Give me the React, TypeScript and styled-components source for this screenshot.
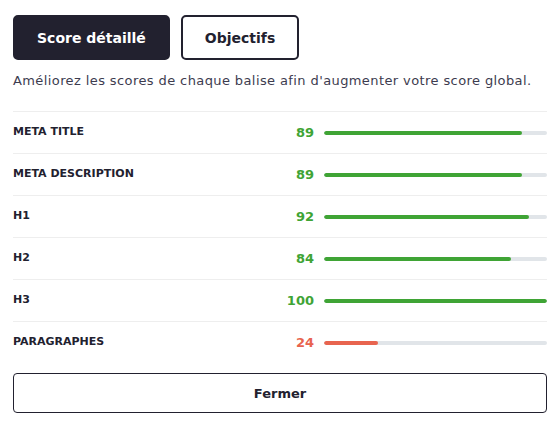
import React, { useState } from "react";
import styled, { createGlobalStyle } from "styled-components";

const GlobalStyle = createGlobalStyle`
  body {
    margin: 0;
    background: #ffffff;
    font-family: "DejaVu Sans", "Open Sans", sans-serif;
    color: #22212f;
  }
`;

type Score = { label: string; value: number };

const scores: Score[] = [
    { label: "Meta title", value: 89 },
    { label: "Meta description", value: 89 },
    { label: "H1", value: 92 },
    { label: "H2", value: 84 },
    { label: "H3", value: 100 },
    { label: "Paragraphes", value: 24 },
];

const App = () => {
    const [tab, setTab] = useState<"score" | "objectifs">("score");

    return (
        <>
            <GlobalStyle />
            <Panel>
                <Tabs>
                    <TabButton $active={tab === "score"} onClick={() => setTab("score")}>
                        Score détaillé
                    </TabButton>
                    <TabButton $active={tab === "objectifs"} onClick={() => setTab("objectifs")}>
                        Objectifs
                    </TabButton>
                </Tabs>
                <Intro>Améliorez les scores de chaque balise afin d'augmenter votre score global.</Intro>
                <List>
                    {scores.map((s) => (
                        <Row key={s.label}>
                            <Label>{s.label}</Label>
                            <Value $low={s.value < 50}>{s.value}</Value>
                            <Track>
                                <Fill $low={s.value < 50} style={{ width: `${s.value}%` }} />
                            </Track>
                        </Row>
                    ))}
                </List>
                <CloseButton>Fermer</CloseButton>
            </Panel>
        </>
    );
};

export default App;

const Panel = styled.div`
    width: 534px;
    padding: 15px 9px 0 13px;
    display: flex;
    flex-direction: column;
`;

const Tabs = styled.div`
    display: flex;
    gap: 11px;
`;

const TabButton = styled.button<{ $active: boolean }>`
    height: 45px;
    padding: 0 22px;
    border-radius: 5px;
    border: 2px solid #22212f;
    background: ${(p) => (p.$active ? "#22212f" : "#ffffff")};
    color: ${(p) => (p.$active ? "#ffffff" : "#22212f")};
    font-family: inherit;
    font-size: 14px;
    font-weight: 700;
    cursor: pointer;
`;

const Intro = styled.p`
    margin: 12px 0 21px;
    font-size: 13px;
    line-height: 18px;
    letter-spacing: 0.4px;
    color: #3d3c4f;
`;

const List = styled.div`
    display: flex;
    flex-direction: column;
`;

const Row = styled.div`
    height: 41px;
    border-top: 1px solid #eeeeee;
    display: flex;
    align-items: center;
    gap: 10px;
`;

const Label = styled.span`
    flex: 1;
    font-size: 11px;
    font-weight: 700;
    text-transform: uppercase;
    color: #22212f;
    margin-top: -2px;
`;

const Value = styled.span<{ $low: boolean }>`
    width: 30px;
    text-align: right;
    font-size: 13px;
    font-weight: 700;
    color: ${(p) => (p.$low ? "#e8644f" : "#3fa435")};
`;

const Track = styled.div`
    width: 223px;
    height: 4px;
    border-radius: 2px;
    background: #e1e5e9;
    overflow: hidden;
`;

const Fill = styled.div<{ $low: boolean }>`
    height: 100%;
    border-radius: 2px;
    background: ${(p) => (p.$low ? "#e8644f" : "#3fa435")};
`;

const CloseButton = styled.button`
    margin-top: 10px;
    height: 40px;
    border: 1px solid #22212f;
    border-radius: 4px;
    background: #ffffff;
    color: #22212f;
    font-family: inherit;
    font-size: 13px;
    font-weight: 700;
    cursor: pointer;
`;
